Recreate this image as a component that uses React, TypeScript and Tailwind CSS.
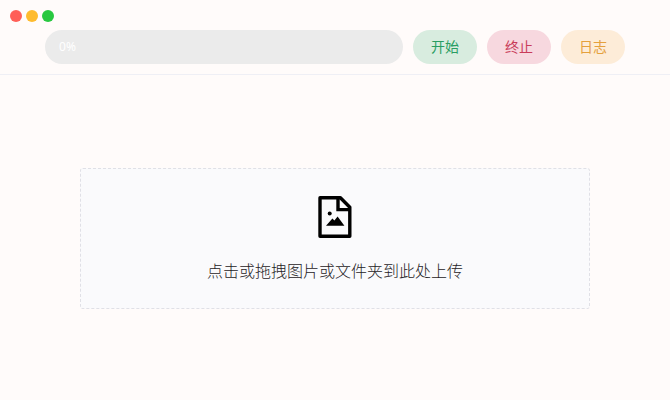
import { useState } from 'react';

const windowDots = [
  { label: 'Close', color: 'bg-[#ff5f57]' },
  { label: 'Minimize', color: 'bg-[#febb2e]' },
  { label: 'Zoom', color: 'bg-[#28c840]' },
];

const actions = [
  { label: '开始', color: 'bg-[#d8ecdf] text-[#2a9d62]' },
  { label: '终止', color: 'bg-[#f7d8df] text-[#c93c5a]' },
  { label: '日志', color: 'bg-[#fdecd8] text-[#e5a03c]' },
];

const WindowControls = () => (
  <div className="absolute top-[10px] left-[10px] flex gap-1">
    {windowDots.map((dot) => (
      <button key={dot.label} type="button" aria-label={dot.label} className={`size-3 rounded-full ${dot.color}`} />
    ))}
  </div>
);

const ProgressBar = ({ value }: { value: number }) => (
  <div
    role="progressbar"
    aria-valuenow={value}
    aria-valuemin={0}
    aria-valuemax={100}
    className="relative flex h-[34px] flex-1 items-center overflow-hidden rounded-full bg-[#ebebeb]"
  >
    <div className="absolute inset-y-0 left-0 bg-[#18a058]" style={{ width: `${value}%` }} />
    <span className="relative px-[14px] text-xs text-white">{value}%</span>
  </div>
);

const ImageFileIcon = () => (
  <svg className="h-[42px] w-[34px]" viewBox="0 0 34 42" fill="none" aria-hidden="true">
    <path
      d="M2 1.8H22.4L31.8 11.2V40.2H2Z"
      stroke="black"
      strokeWidth="3.4"
      strokeLinejoin="round"
    />
    <path d="M20 1.8V13.6H31.8" stroke="black" strokeWidth="3.4" />
    <circle cx="11.7" cy="17.6" r="2" fill="black" />
    <path d="M8 29.8L14.4 22.4L16.4 24.6L19.6 20.6L26.4 29.8Z" fill="black" />
  </svg>
);

const App = () => {
  const [progress] = useState(0);

  return (
    <div className="min-h-screen bg-[#fffbfa] font-['Noto_Sans','Noto_Sans_CJK_SC',sans-serif]">
      <WindowControls />
      <header className="flex gap-[10px] border-b border-[#efeff5] px-[45px] pt-[30px] pb-[10px]">
        <ProgressBar value={progress} />
        {actions.map((action) => (
          <button key={action.label} type="button" className={`h-[34px] rounded-full px-[18px] text-sm ${action.color}`}>
            {action.label}
          </button>
        ))}
      </header>
      <main className="px-20 pt-[93px]">
        <label className="flex cursor-pointer flex-col items-center gap-[21px] rounded-[3px] border border-dashed border-[#e0e0e6] bg-[#fafafc] pt-[27px] pb-6">
          <ImageFileIcon />
          <span className="text-base leading-[25px] font-light text-[#1f2225]">点击或拖拽图片或文件夹到此处上传</span>
          <input type="file" multiple accept="image/*" className="sr-only" />
        </label>
      </main>
    </div>
  );
};

export default App;
